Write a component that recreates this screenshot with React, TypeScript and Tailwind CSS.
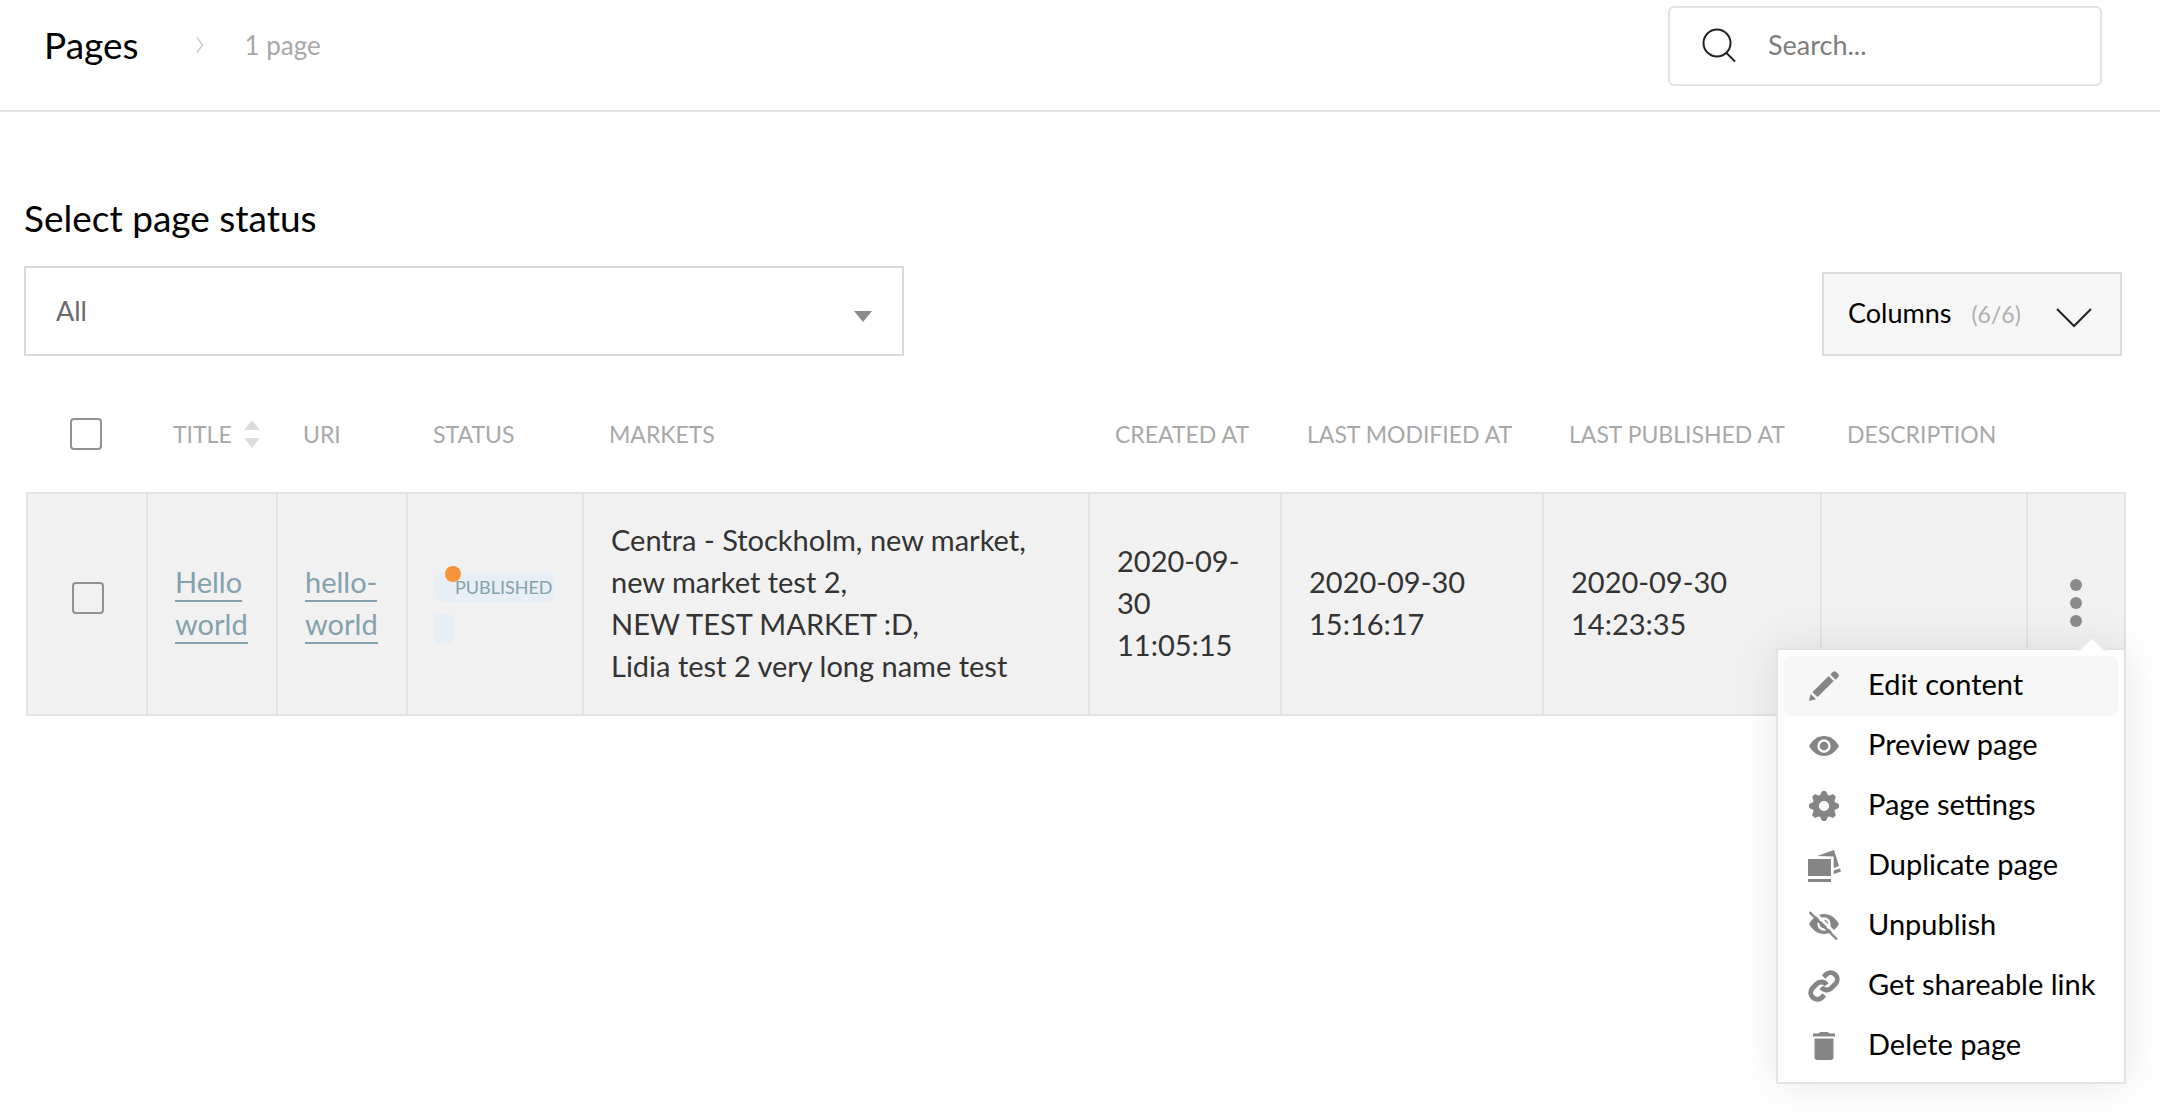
import { useState } from "react";
import type { ReactNode } from "react";

const EYE = "M0 10C3.5 4 8.5 0 15 0s11.5 4 15 10c-3.5 6-8.5 10-15 10S3.5 16 0 10Z";

const PencilIcon = () => (
  <svg width="30" height="30" viewBox="0 0 30 30" fill="currentColor">
    <path d="M3.3 21.3 19.7 5l5 4.9L8.6 26Z" />
    <path d="M21.3 3.5 23.5 1.3q2-2 4 0l1.3 1.3q2 2 0 4l-2.3 2.1Z" />
    <path d="M1.6 22.8 7 28.3 0 30Z" />
  </svg>
);

const EyeIcon = () => (
  <svg width="30" height="20" viewBox="0 0 30 20">
    <path d={EYE} fill="currentColor" />
    <circle cx="15" cy="10" r="5.5" fill="currentColor" stroke="#fff" strokeWidth="2.3" />
  </svg>
);

const GearIcon = () => (
  <svg width="30" height="30" viewBox="-15 -15 30 30" fill="currentColor">
    <circle r="8.3" fill="none" stroke="currentColor" strokeWidth="6.4" />
    {[0, 45, 90, 135, 180, 225, 270, 315].map((angle) => (
      <path key={angle} d="M-4-10.5-2.3-14.2Q-2-15-1-15H1Q2-15 2.3-14.2L4-10.5Z" transform={`rotate(${angle})`} />
    ))}
  </svg>
);

const DuplicateIcon = () => (
  <svg width="33" height="32" viewBox="0 0 33 32" fill="currentColor">
    <path d="M0 9h23v17H0ZM0 29h23v3H0Z" />
    <path d="M9.3 6 26 0l5 16-5.3 2V6.5Z" />
    <path d="M25.7 20.5 32 18.5l1 3-7.3 2.5Z" />
  </svg>
);

const EyeOffIcon = () => (
  <svg width="30" height="30" viewBox="0 0 30 30">
    <g transform="translate(0 3)">
      <path d={EYE} fill="currentColor" />
      <circle cx="15" cy="10" r="5.5" fill="currentColor" stroke="#fff" strokeWidth="2.3" />
    </g>
    <path d="M2.5-1.5 31 27" stroke="#fff" strokeWidth="3" />
    <path d="M.5 1 28 28.5" stroke="currentColor" strokeWidth="2.4" />
  </svg>
);

const LinkIcon = () => (
  <svg width="32" height="32" viewBox="0 0 24 24" fill="none" stroke="currentColor" strokeWidth="3.7">
    <path d="M10 13a5 5 0 0 0 7.54.54l3-3a5 5 0 0 0-7.07-7.07l-1.72 1.71" />
    <path d="M14 11a5 5 0 0 0-7.54-.54l-3 3a5 5 0 0 0 7.07 7.07l1.71-1.71" />
  </svg>
);

const TrashIcon = () => (
  <svg width="22" height="28" viewBox="0 0 22 28" fill="currentColor">
    <path d="M0 1.5h5.5Q6.5 0 8 0h6q1.5 0 2.5 1.5H22v3H0Z" />
    <path d="M1.5 6.5h19V25q0 3-3 3h-13q-3 0-3-3Z" />
  </svg>
);

const SearchIcon = () => (
  <svg width="34" height="36" viewBox="0 0 34 36" fill="none" stroke="#222" strokeWidth="2">
    <circle cx="15" cy="15" r="13.5" />
    <path d="m24.5 25 8.5 8.5" />
  </svg>
);

const menuItems: { label: string; icon: ReactNode }[] = [
  { label: "Edit content", icon: <PencilIcon /> },
  { label: "Preview page", icon: <EyeIcon /> },
  { label: "Page settings", icon: <GearIcon /> },
  { label: "Duplicate page", icon: <DuplicateIcon /> },
  { label: "Unpublish", icon: <EyeOffIcon /> },
  { label: "Get shareable link", icon: <LinkIcon /> },
  { label: "Delete page", icon: <TrashIcon /> },
];

const checkboxClass =
  "block size-8 appearance-none rounded border-2 border-[#929292] checked:bg-[#84a2ad]";
const thClass = "h-[116px] pl-[27px] text-left font-normal whitespace-nowrap";
const tdClass = "border-y-2 border-l-2 border-[#e3e3e3] pt-[25px] pr-6 pb-[27px] pl-[27px]";
const linkClass = "border-b-2 border-[#84a2ad] pb-px text-[#84a2ad]";

const App = () => {
  const [menuOpen, setMenuOpen] = useState(true);
  const [activeItem, setActiveItem] = useState("Edit content");

  return (
    <div className="min-h-screen bg-white font-['Lato','Liberation_Sans',sans-serif] text-black">
      <header className="flex items-center justify-between border-b-2 border-[#e2e2e2] pt-1.5 pr-[58px] pb-6 pl-11">
        <div className="flex items-center pb-0.5">
          <h1 className="text-[37px] leading-10">Pages</h1>
          <svg className="mr-10 ml-14" width="10" height="16" viewBox="0 0 10 16" fill="none" stroke="#ccc" strokeWidth="1.5">
            <path d="m2 .5 5.5 7.5L2 15.5" />
          </svg>
          <span className="text-[26px] text-[#a8a8a8]">1 page</span>
        </div>
        <label className="flex h-20 w-[434px] items-center gap-8 rounded-md border-2 border-[#e2e2e2] pl-8">
          <SearchIcon />
          <input
            type="text"
            aria-label="Search"
            placeholder="Search..."
            className="min-w-0 flex-1 pb-0.5 text-[27px] outline-none placeholder:text-[#7d7d7d]"
          />
        </label>
      </header>

      <main className="pt-[86px]">
        <div className="flex items-end justify-between pr-[38px] pl-6">
          <div className="w-full max-w-[880px]">
            <label htmlFor="page-status" className="mb-7 block text-[37px] leading-10">
              Select page status
            </label>
            <div className="relative">
              <select
                id="page-status"
                className="block h-[90px] w-full appearance-none border-2 border-[#d9d9d9] bg-white pl-[30px] text-[27px] text-[#6b6b6b]"
              >
                <option>All</option>
              </select>
              <svg className="pointer-events-none absolute top-[45px] right-8" width="18" height="11" viewBox="0 0 18 11" fill="#8a8a8a">
                <path d="M0 0h18L9 11Z" />
              </svg>
            </div>
          </div>
          <button type="button" className="flex h-[84px] w-[300px] items-center border-2 border-[#dcdcdc] bg-[#f6f6f6] pr-7 pl-6">
            <span className="pb-0.5 text-[27px]">Columns</span>
            <span className="ml-5 text-[23px] text-[#b0b0b0]">(6/6)</span>
            <svg className="mt-2 ml-auto" width="36" height="20" viewBox="0 0 36 20" fill="none" stroke="#222" strokeWidth="2">
              <path d="m1 1 17 17L35 1" />
            </svg>
          </button>
        </div>

        <div className="mt-5 mr-[34px] ml-[26px]">
          <table className="w-full table-fixed border-separate border-spacing-0">
            <colgroup>
              <col className="w-[120px]" />
              <col className="w-[130px]" />
              <col className="w-[130px]" />
              <col className="w-[176px]" />
              <col />
              <col className="w-[192px]" />
              <col className="w-[262px]" />
              <col className="w-[278px]" />
              <col className="w-[206px]" />
              <col className="w-[100px]" />
            </colgroup>
            <thead className="text-[23px] text-[#a8a8a8]">
              <tr>
                <th className="pl-11">
                  <input type="checkbox" aria-label="Select all pages" className={checkboxClass} />
                </th>
                <th className={thClass}>
                  <button type="button" className="flex items-center gap-3">
                    TITLE
                    <svg width="16" height="28" viewBox="0 0 16 28" fill="#dcdcdc">
                      <path d="M8 0l8 10H0ZM0 18h16L8 28Z" />
                    </svg>
                  </button>
                </th>
                <th className={thClass}>URI</th>
                <th className={thClass}>STATUS</th>
                <th className={thClass}>MARKETS</th>
                <th className={thClass}>CREATED AT</th>
                <th className={thClass}>LAST MODIFIED AT</th>
                <th className={thClass}>LAST PUBLISHED AT</th>
                <th className={thClass}>DESCRIPTION</th>
                <td />
              </tr>
            </thead>
            <tbody className="bg-[#f1f1f1] text-[29px] leading-[42px] text-[#333]">
              <tr>
                <td className="border-y-2 border-l-2 border-[#e3e3e3] pb-3 pl-11">
                  <input type="checkbox" aria-label="Select Hello world" className={checkboxClass} />
                </td>
                <td className={tdClass}>
                  <a href="#hello-world" className={linkClass}>Hello world</a>
                </td>
                <td className={tdClass}>
                  <a href="#hello-world" className={linkClass}>hello-world</a>
                </td>
                <td className={tdClass}>
                  <div className="relative mt-2.5 mb-3 h-[30px] w-[118px] rounded-l-lg bg-[#e8eef5] pl-5 text-[18px] leading-[30px] text-[#84a2ad]">
                    PUBLISHED
                    <span className="absolute -top-1.5 left-2.5 size-4 rounded-full bg-[#f7933c]" />
                  </div>
                  <div className="h-[30px] w-5 rounded-r-lg bg-[#e8eef5]" />
                </td>
                <td className={tdClass}>
                  Centra - Stockholm, new market,
                  <br />
                  new market test 2,
                  <br />
                  NEW TEST MARKET :D,
                  <br />
                  Lidia test 2 very long name test
                </td>
                <td className={tdClass}>2020-09-30 11:05:15</td>
                <td className={tdClass}>2020-09-30 15:16:17</td>
                <td className={tdClass}>2020-09-30 14:23:35</td>
                <td className={tdClass} />
                <td className="relative border-2 border-[#e3e3e3] pb-0.5">
                  <button
                    type="button"
                    aria-label="Page actions"
                    aria-expanded={menuOpen}
                    onClick={() => setMenuOpen(!menuOpen)}
                    className="mx-auto flex flex-col items-center gap-1.5 px-3"
                  >
                    <span className="size-3 rounded-full bg-[#8a8b8d]" />
                    <span className="size-3 rounded-full bg-[#8a8b8d]" />
                    <span className="size-3 rounded-full bg-[#8a8b8d]" />
                  </button>
                  {menuOpen && (
                    <div className="absolute top-[154px] -right-0.5 z-10 w-[350px] border-2 border-[#e2e2e2] bg-white p-1.5 text-black shadow-[0_0_40px_rgba(0,0,0,0.1)]">
                      <span className="absolute -top-2.5 right-[22px] size-5 rotate-45 border-t-2 border-l-2 border-[#e9e9e9] bg-white" />
                      <ul className="relative">
                        {menuItems.map(({ label, icon }) => (
                          <li key={label}>
                            <button
                              type="button"
                              onMouseEnter={() => setActiveItem(label)}
                              className={`flex h-[60px] w-full items-center gap-6 rounded-md pl-5 text-left whitespace-nowrap ${
                                activeItem === label ? "bg-[#f7f7f7]" : ""
                              }`}
                            >
                              <span className="flex w-10 justify-center text-[#858585]">{icon}</span>
                              <span className="pb-1">{label}</span>
                            </button>
                          </li>
                        ))}
                      </ul>
                    </div>
                  )}
                </td>
              </tr>
            </tbody>
          </table>
        </div>
      </main>
    </div>
  );
};

export default App;
